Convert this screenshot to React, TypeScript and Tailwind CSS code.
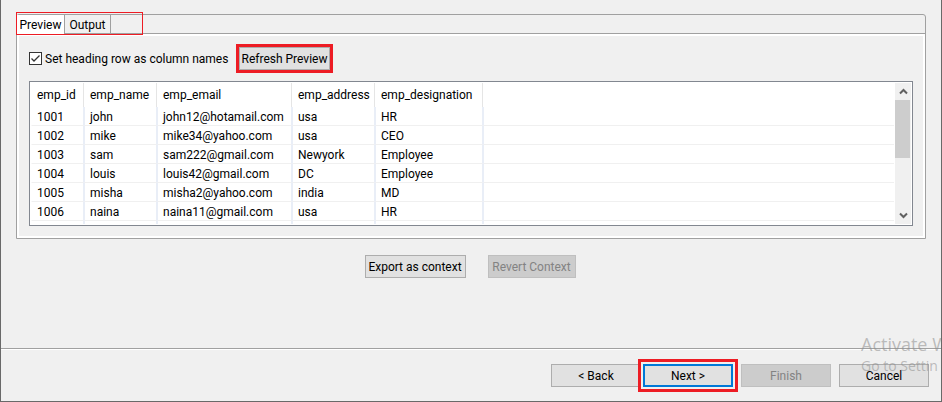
import React from "react";

const columns = ["emp_id", "emp_name", "emp_email", "emp_address", "emp_designation"];

const rows = [
  ["1001", "john", "john12@hotamail.com", "usa", "HR"],
  ["1002", "mike", "mike34@yahoo.com", "usa", "CEO"],
  ["1003", "sam", "sam222@gmail.com", "Newyork", "Employee"],
  ["1004", "louis", "louis42@gmail.com", "DC", "Employee"],
  ["1005", "misha", "misha2@yahoo.com", "india", "MD"],
  ["1006", "naina", "naina11@gmail.com", "usa", "HR"],
];

const button =
  "flex h-[23px] items-center justify-center whitespace-nowrap border leading-4 ";
const normal = "border-[#adadad] bg-[#e1e1e1] text-black ";
const disabled = "border-[#bfbfbf] bg-[#cccccc] text-[#838383] ";

function PreviewTable() {
  return (
    <div className="flex h-[145px] border border-[#828790] bg-white p-px">
      <div className="min-w-0 flex-1 overflow-hidden pr-px">
        <table className="w-full table-fixed border-separate border-spacing-0 text-left">
          <colgroup>
            <col className="w-[53px]" />
            <col className="w-[73px]" />
            <col className="w-[135px]" />
            <col className="w-[83px]" />
            <col className="w-[108px]" />
            <col />
          </colgroup>
          <thead>
            <tr className="h-6">
              {columns.map((name) => (
                <th
                  key={name}
                  scope="col"
                  className="whitespace-nowrap border-r border-[#e5e5e5] py-0 pl-1.5 font-normal leading-4"
                >
                  {name}
                </th>
              ))}
              <td />
            </tr>
          </thead>
          <tbody>
            {rows.map((row) => (
              <tr key={row[0]} className="h-[19px]">
                {row.map((value, i) => (
                  <td
                    key={columns[i]}
                    className="whitespace-nowrap border-r border-b border-l border-[#e9eef7] border-b-[#f0f0f0] p-0 pt-0.5 pl-[5px] leading-4 first:border-l-white"
                  >
                    {value}
                  </td>
                ))}
                <td className="border-b border-l border-b-[#f0f0f0] border-l-[#e9eef7]" />
              </tr>
            ))}
            <tr className="h-[3px]" aria-hidden="true">
              {columns.map((name) => (
                <td
                  key={name}
                  className="border-r border-l border-[#e9eef7] p-0 first:border-l-white"
                />
              ))}
              <td className="border-l border-[#e9eef7] p-0" />
            </tr>
          </tbody>
        </table>
      </div>
      <div className="flex w-4 flex-col bg-[#f0f0f0]">
        <button
          type="button"
          aria-label="Scroll up"
          className="flex h-[17px] items-center justify-center"
        >
          <svg width="9" height="7" viewBox="0 0 9 7" fill="none" stroke="#606060" strokeWidth="2">
            <path d="M1 5.5 4.5 2 8 5.5" />
          </svg>
        </button>
        <div className="mr-px h-[58px] bg-[#cdcdcd]" />
        <div className="flex-1" />
        <button
          type="button"
          aria-label="Scroll down"
          className="flex h-[17px] items-center justify-center"
        >
          <svg width="9" height="7" viewBox="0 0 9 7" fill="none" stroke="#606060" strokeWidth="2">
            <path d="M1 1.5 4.5 5 8 1.5" />
          </svg>
        </button>
      </div>
    </div>
  );
}

export default function App() {
  return (
    <div className="relative flex min-h-screen flex-col overflow-hidden border-x border-b border-[#696969] bg-[#f0f0f0] font-[Roboto,sans-serif] text-[12px] text-black">
      <main className="flex-1 px-[15px] pt-3.5">
        <section className="rounded-t-[3px] border border-[#a0a0a0]">
          <div role="tablist" className="relative flex h-[19px] border-b border-[#a0a0a0]">
            <button
              type="button"
              role="tab"
              aria-selected="true"
              className="-mb-px flex w-12 items-center justify-center border-r border-[#a0a0a0] bg-white leading-4"
            >
              Preview
            </button>
            <button
              type="button"
              role="tab"
              aria-selected="false"
              className="flex w-[46px] items-center justify-center border-r border-[#a0a0a0] pt-0.5 leading-4"
            >
              Output
            </button>
            <div className="pointer-events-none absolute -top-[3px] -left-px h-[23px] w-[127px] border border-[#ed1c24]" />
          </div>
          <div className="border-2 border-white px-2.5 pt-2 pb-2.5">
            <div className="mb-2 flex items-center gap-2.5">
              <label className="flex w-[197px] items-center gap-[3px] whitespace-nowrap leading-4">
                <span className="relative flex size-[13px] shrink-0">
                  <input
                    type="checkbox"
                    defaultChecked
                    className="peer size-[13px] appearance-none border border-[#333333] bg-white"
                  />
                  <svg
                    className="pointer-events-none absolute inset-0 hidden peer-checked:block"
                    width="13"
                    height="13"
                    viewBox="0 0 13 13"
                    fill="none"
                    stroke="#333333"
                    strokeWidth="1.3"
                  >
                    <path d="M2.5 6.5 5 9 10.5 3.5" />
                  </svg>
                </span>
                Set heading row as column names
              </label>
              <div className="border-3 border-[#ed1c24]">
                <button type="button" className={button + normal + "w-[91px]"}>
                  Refresh Preview
                </button>
              </div>
            </div>
            <PreviewTable />
          </div>
        </section>
        <div className="mt-4 flex justify-center gap-[22px] pr-0.5">
          <button type="button" className={button + normal + "w-[101px]"}>
            Export as context
          </button>
          <button type="button" disabled className={button + disabled + "w-[88px]"}>
            Revert Context
          </button>
        </div>
      </main>

      <footer className="border-t border-[#a0a0a0]">
        <div className="flex justify-end border-t border-white pt-3.5 pr-3 pb-3.5">
          <button type="button" className={button + normal + "mr-0.5 w-[90px]"}>
            &lt; Back
          </button>
          <div className="relative mr-2">
            <button
              type="button"
              className="flex h-[23px] w-[90px] items-center justify-center border-2 border-[#0078d7] bg-[#e1e1e1] leading-4"
            >
              Next &gt;
            </button>
            <div className="pointer-events-none absolute -inset-x-[5px] -inset-y-[5px] border-3 border-[#ed1c24]" />
          </div>
          <button type="button" disabled className={button + disabled + "mr-2 w-[90px]"}>
            Finish
          </button>
          <button type="button" className={button + normal + "w-[90px]"}>
            Cancel
          </button>
        </div>
      </footer>

      <div className="pointer-events-none absolute right-0 bottom-[25px] w-20 overflow-hidden whitespace-nowrap font-['Open_Sans',sans-serif] text-[#8c8c8c]/55">
        <p className="text-[18px] leading-6">Activate W</p>
        <p className="text-[14px] leading-5">Go to Settin</p>
      </div>
    </div>
  );
}
